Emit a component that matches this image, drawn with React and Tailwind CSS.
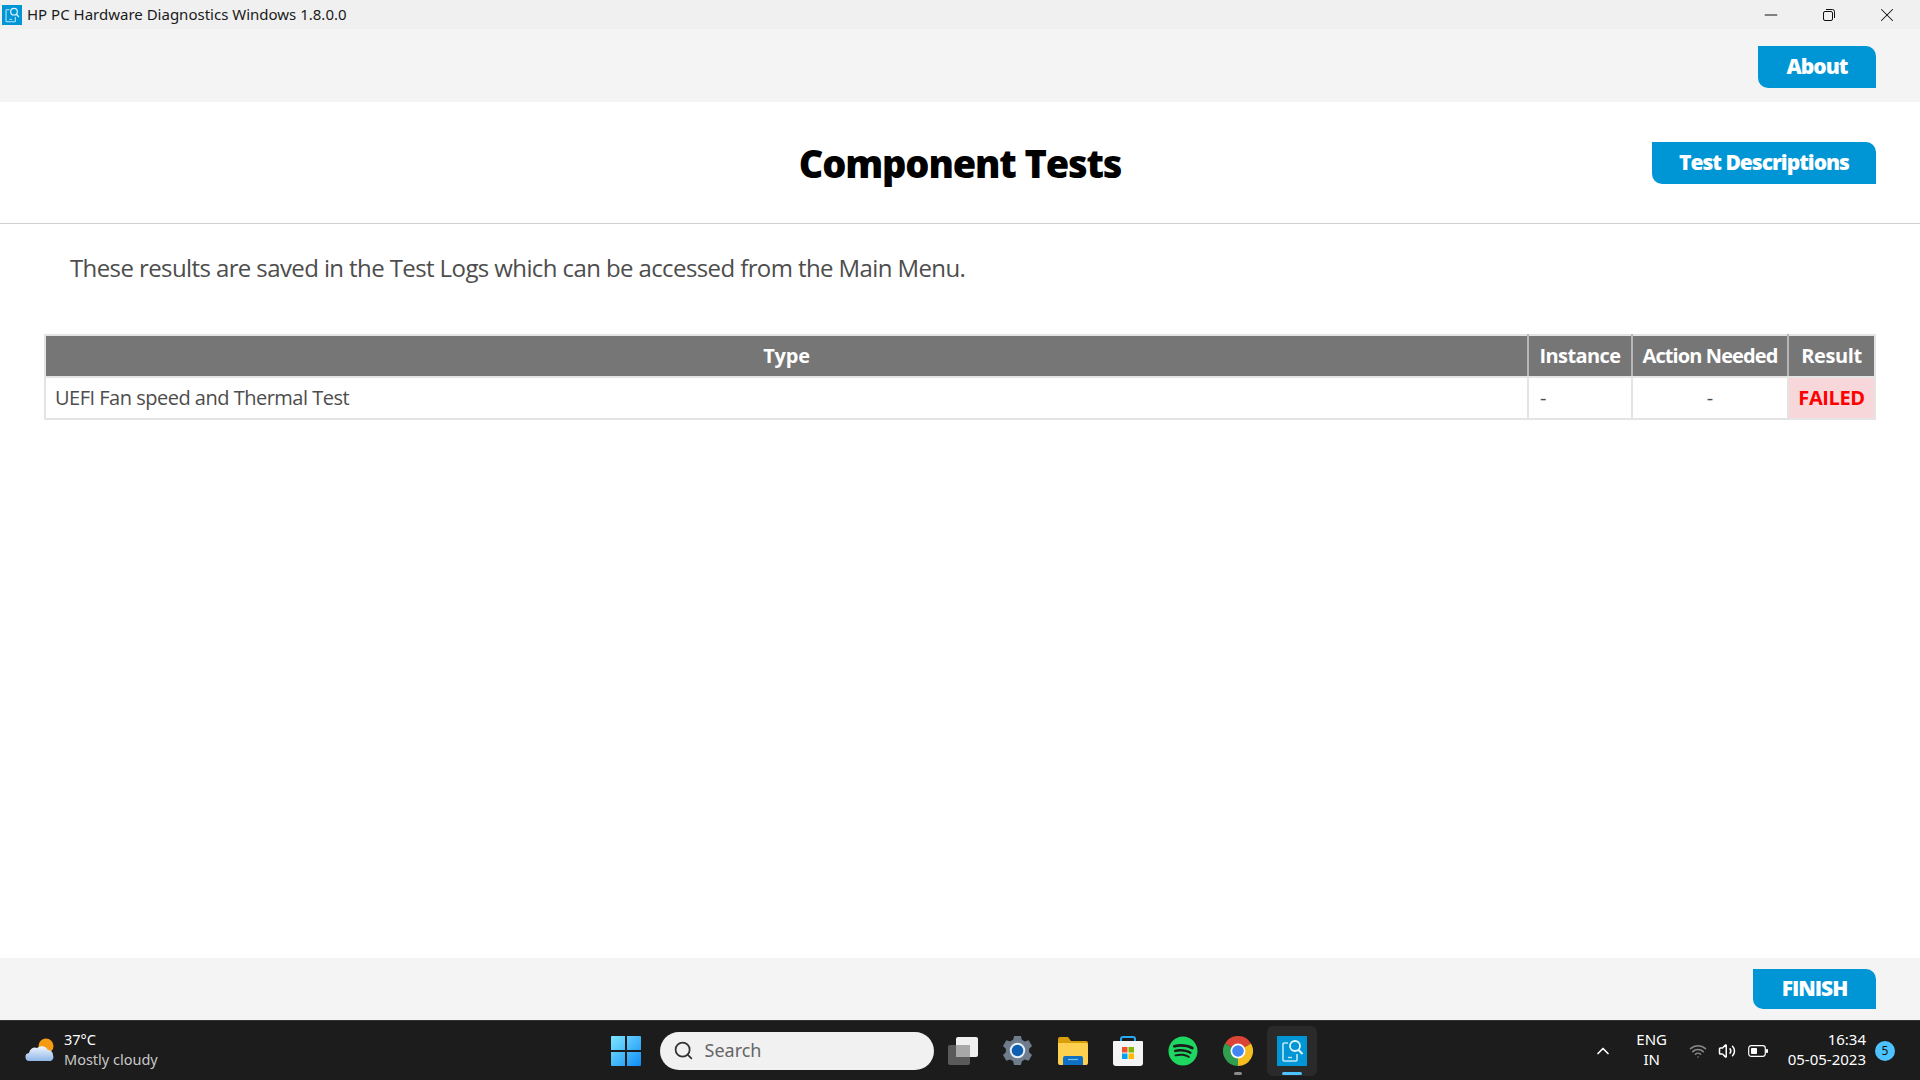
import { ChevronUp, Minus, Search, Volume2, Wifi, X } from "lucide-react";
import { FaSpotify } from "react-icons/fa";

const HpIcon = ({ className }) => (
    <svg viewBox="0 0 30 30" className={className}>
        <rect width="30" height="30" fill="#0096d6" />
        <path d="M11 7H7a1 1 0 0 0-1 1v16a1 1 0 0 0 1 1h12a1 1 0 0 0 1-1v-6" fill="none" stroke="#bfe6f7" strokeWidth="1.6" />
        <circle cx="18" cy="10" r="5" fill="none" stroke="#e3f5fc" strokeWidth="1.8" />
        <path d="M21.5 14l4 4" stroke="#e3f5fc" strokeWidth="2" />
        <path d="M11 21.5h4" stroke="#bfe6f7" strokeWidth="1.4" />
    </svg>
);

const RestoreIcon = () => (
    <svg viewBox="0 0 12 12" className="w-3 h-3" fill="none" stroke="#111" strokeWidth="1">
        <rect x="0.5" y="2.5" width="9" height="9" rx="1.5" />
        <path d="M3 .5h6.5a2 2 0 0 1 2 2V9" />
    </svg>
);

const WeatherIcon = () => (
    <svg viewBox="0 0 32 28" className="w-8 h-7">
        <defs>
            <linearGradient id="cloud" x1="0" y1="0" x2="0" y2="1">
                <stop offset="0" stopColor="#f1f6fd" />
                <stop offset="1" stopColor="#8db6e8" />
            </linearGradient>
        </defs>
        <circle cx="21" cy="9" r="7.5" fill="#f59a13" />
        <path d="M5 24a4 4 0 0 1-1-8 6 6 0 0 1 8-5 7 7 0 0 1 11 2 5 5 0 0 1 5 5 5 5 0 0 1-2 6z" fill="url(#cloud)" />
    </svg>
);

const StartIcon = () => (
    <svg viewBox="0 0 30 30" className="w-[30px] h-[30px]">
        <defs>
            <linearGradient id="win" x1="0" y1="0" x2="1" y2="1">
                <stop offset="0" stopColor="#7fe6ff" />
                <stop offset="1" stopColor="#0f8cf5" />
            </linearGradient>
        </defs>
        <path d="M1 0h13v14H0V1a1 1 0 0 1 1-1zM16 0h13a1 1 0 0 1 1 1v13H16zM0 16h14v14H1a1 1 0 0 1-1-1zM16 16h14v13a1 1 0 0 1-1 1H16z" fill="url(#win)" />
    </svg>
);

const TaskViewIcon = () => (
    <svg viewBox="0 0 30 28" className="w-[30px] h-7">
        <rect x="0" y="8" width="22" height="20" rx="2" fill="#5a5a5a" />
        <rect x="8" y="0" width="22" height="20" rx="2" fill="#f0f0f0" />
        <rect x="8" y="8" width="14" height="12" fill="#a8a8a8" />
    </svg>
);

const GearIcon = () => (
    <svg viewBox="0 0 32 32" className="w-[31px] h-[31px]">
        <path d="M12.5 1h7l1 4 3 1.6 4-1.2 3.5 6-3 2.8v3.6l3 2.8-3.500 6-4-1.200-3 1.600-1 4h-7l-1-4-3-1.600-4 1.200-3.500-6 3-2.800v-3.600l-3-2.800 3.500-6 4 1.200 3-1.600z" fill="#6f7c8b" />
        <circle cx="16" cy="16" r="8" fill="#e8eef5" />
        <circle cx="16" cy="16" r="6" fill="#0f5fb0" />
    </svg>
);

const FolderIcon = () => (
    <svg viewBox="0 0 30 28" className="w-[30px] h-7">
        <path d="M0 2a2 2 0 0 1 2-2h8l3 4h15a2 2 0 0 1 2 2v4H0z" fill="#d99f0b" />
        <path d="M0 6h28a2 2 0 0 1 2 2v18a2 2 0 0 1-2 2H2a2 2 0 0 1-2-2z" fill="#fdd14f" />
        <path d="M5 21a2 2 0 0 1 2-2h16a2 2 0 0 1 2 2v7H5z" fill="#0f6fc4" />
        <path d="M10 22.500h10" stroke="#7fc2f2" strokeWidth="1.200" />
    </svg>
);

const StoreIcon = () => (
    <svg viewBox="0 0 30 30" className="w-[30px] h-[30px]">
        <path d="M8 6V3a2 2 0 0 1 2-2h10a2 2 0 0 1 2 2v3" fill="none" stroke="#2aa8ee" strokeWidth="2" />
        <path d="M1 5h28a1 1 0 0 1 1 1v21a3 3 0 0 1-3 3H3a3 3 0 0 1-3-3V6a1 1 0 0 1 1-1z" fill="#f4f4f4" />
        <rect x="9" y="11" width="5.500" height="5.500" fill="#f0512a" />
        <rect x="15.500" y="11" width="5.500" height="5.500" fill="#7fba00" />
        <rect x="9" y="17.500" width="5.500" height="5.500" fill="#00a4ef" />
        <rect x="15.500" y="17.500" width="5.500" height="5.500" fill="#ffb900" />
    </svg>
);

const ChromeIcon = () => (
    <svg viewBox="0 0 30 30" className="w-[30px] h-[30px]">
        <path d="M15 15L2 7.500A15 15 0 0 1 28 7.500z" fill="#db4437" />
        <path d="M15 15L28 7.500A15 15 0 0 1 15 30z" fill="#f5bd1f" />
        <path d="M15 15L15 30A15 15 0 0 1 2 7.500z" fill="#2f9e4f" />
        <circle cx="15" cy="15" r="7.500" fill="#fff" />
        <circle cx="15" cy="15" r="5.800" fill="#4285f4" />
    </svg>
);

const BatteryIcon = () => (
    <svg viewBox="0 0 20 12" className="w-5 h-3" fill="none">
        <rect x="0.700" y="0.700" width="16.600" height="10.600" rx="2.500" stroke="#fff" strokeWidth="1.200" />
        <rect x="3" y="3" width="6" height="6" rx="0.800" fill="#fff" />
        <rect x="18" y="4" width="2" height="4" rx="0.800" fill="#fff" />
    </svg>
);

const BlueButton = ({ className, children }) => (
    <button className={`bg-[#0096d6] text-white font-extrabold text-[21px] tracking-[-1px] rounded-tr-[10px] rounded-bl-[10px] flex items-center justify-center ${className}`}>
        {children}
    </button>
);

const App = () => {
    return (
        <div className="h-screen flex flex-col bg-white overflow-hidden font-['Open_Sans',sans-serif]">

            {/* TITLE BAR */}
            <div className="h-[29px] bg-[#f0f0f0] flex items-center shrink-0">
                <HpIcon className="w-5 h-5 ml-[2px]" />
                <span className="ml-[5px] text-[15px] text-[#1a1a1a] font-['Noto_Sans',sans-serif]">
                    HP PC Hardware Diagnostics Windows 1.8.0.0
                </span>
                <div className="ml-auto flex items-center text-[#111]">
                    <div className="w-[58px] flex justify-center"><Minus size={20} strokeWidth={1.2} /></div>
                    <div className="w-[58px] flex justify-center"><RestoreIcon /></div>
                    <div className="w-[58px] mr-[4px] flex justify-center"><X size={22} strokeWidth={1.1} /></div>
                </div>
            </div>

            {/* TOP BAR */}
            <div className="h-[73px] bg-[#f4f4f4] flex justify-end items-start pt-[17px] pr-[44px] shrink-0">
                <BlueButton className="w-[118px] h-[42px]">About</BlueButton>
            </div>

            {/* HEADER */}
            <div className="h-[122px] pt-[2px] border-b border-[#d0d0d0] relative flex items-center justify-center shrink-0">
                <h1 className="text-[38px] font-extrabold text-black tracking-[-1.15px]">Component Tests</h1>
                <BlueButton className="absolute right-[44px] top-[40px] w-[224px] h-[42px]">Test Descriptions</BlueButton>
            </div>

            {/* BODY */}
            <div className="flex-1 px-[44px]">
                <p className="mt-[27px] ml-[26px] text-[24px] leading-[34px] text-[#4d4d4d] tracking-[-0.6px]">
                    These results are saved in the Test Logs which can be accessed from the Main Menu.
                </p>

                <table className="mt-[49px] w-full border-collapse table-fixed text-[20px]">
                    <thead>
                        <tr className="h-[42px] bg-[#767676] text-white font-bold">
                            <th className="border-2 border-[#e4e4e4] border-r-[#b5b5b5] tracking-[-0.2px]">Type</th>
                            <th className="w-[104px] border-2 border-[#e4e4e4] border-x-[#b5b5b5] tracking-[-0.6px]">Instance</th>
                            <th className="w-[156px] border-2 border-[#e4e4e4] border-x-[#b5b5b5] tracking-[-0.9px]">Action Needed</th>
                            <th className="w-[87px] border-2 border-[#e4e4e4] border-l-[#b5b5b5] tracking-[-0.4px]">Result</th>
                        </tr>
                    </thead>
                    <tbody>
                        <tr className="h-[42px]">
                            <td className="border-2 border-[#e4e4e4] pl-[9px] text-[#4d4d4d] tracking-[-0.5px]">UEFI Fan speed and Thermal Test</td>
                            <td className="border-2 border-[#e4e4e4] pl-[11px] text-[#4d4d4d]">-</td>
                            <td className="border-2 border-[#e4e4e4] text-center text-[#4d4d4d]">-</td>
                            <td className="border-2 border-[#e4e4e4] text-center bg-[#f7d7d9] text-[#ff0000] font-bold tracking-[-0.4px]">FAILED</td>
                        </tr>
                    </tbody>
                </table>
            </div>

            {/* FOOTER */}
            <div className="h-[62px] bg-[#f4f4f4] flex justify-end items-start pt-[11px] pr-[44px] shrink-0">
                <BlueButton className="w-[123px] h-[40px]">FINISH</BlueButton>
            </div>

            {/* TASKBAR */}
            <div className="h-[60px] bg-[#1c1c1c] border-t border-[#333] grid grid-cols-[1fr_auto_1fr] items-center shrink-0 font-['Noto_Sans',sans-serif]">

                <div className="flex items-center pl-[25px]">
                    <WeatherIcon />
                    <div className="ml-[7px] -mt-[3px] text-[14.500px] leading-[20px]">
                        <p className="text-white">37°C</p>
                        <p className="text-[#c8c8c8]">Mostly cloudy</p>
                    </div>
                </div>

                <div className="flex items-center">
                    <div className="w-[56px] pl-[7px] flex justify-start"><StartIcon /></div>
                    <div className="w-[274px] h-[38px] rounded-full bg-[#f1f1f1] flex items-center pl-[13px]">
                        <Search size={21} strokeWidth={2} className="text-[#333]" />
                        <span className="ml-[11px] text-[18px] text-[#666]">Search</span>
                    </div>
                    <div className="w-[58px] flex justify-center"><TaskViewIcon /></div>
                    <div className="w-[52px] flex justify-center"><GearIcon /></div>
                    <div className="w-[58px] flex justify-center"><FolderIcon /></div>
                    <div className="w-[52px] flex justify-center"><StoreIcon /></div>
                    <div className="w-[58px] flex justify-center"><FaSpotify size={30} className="text-[#1ed760]" /></div>
                    <div className="w-[52px] flex flex-col items-center relative">
                        <ChromeIcon />
                        <div className="absolute -bottom-[9px] w-2 h-[3px] rounded-full bg-[#8a8a8a]" />
                    </div>
                    <div className="w-[50px] h-[50px] ml-[3px] rounded-md bg-[#2a2a2a] flex items-center justify-center relative">
                        <HpIcon className="w-[30px] h-[30px]" />
                        <div className="absolute bottom-[1px] w-5 h-[3px] rounded-full bg-[#4cc2ff]" />
                    </div>
                </div>

                <div className="flex items-center justify-end text-white">
                    <ChevronUp size={20} strokeWidth={2} />
                    <div className="ml-[22px] w-[34px] -mt-[3px] text-center text-[15px] leading-[20px]">
                        <p>ENG</p>
                        <p>IN</p>
                    </div>
                    <Wifi size={18} className="ml-[20px] text-[#8a8a8a]" />
                    <Volume2 size={18} className="ml-[11px]" />
                    <div className="ml-[12px]"><BatteryIcon /></div>
                    <div className="ml-[20px] -mt-[3px] text-right text-[15px] leading-[20px]">
                        <p>16:34</p>
                        <p>05-05-2023</p>
                    </div>
                    <div className="ml-[9px] mr-[25px] w-5 h-5 rounded-full bg-[#4cc2ff] text-[#111] text-[12px] flex items-center justify-center">5</div>
                </div>
            </div>
        </div>
    );
};

export default App;
